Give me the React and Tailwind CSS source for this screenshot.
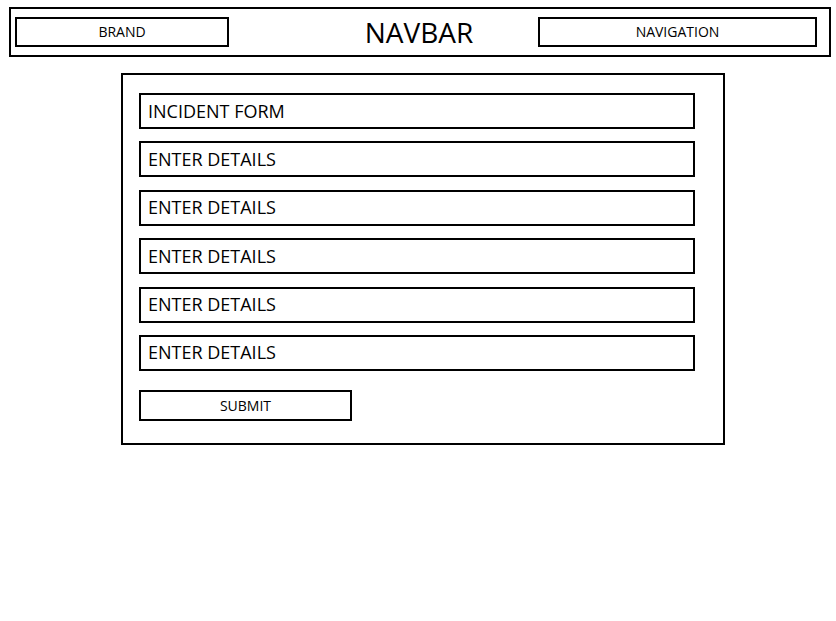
const font = { fontFamily: '"Open Sans", "Liberation Sans", sans-serif' }

const Field = ({ label }) => (
    <div className="h-[36px] border-2 border-black flex items-center pl-[7px] text-[18px] text-black">
        {label}
    </div>
)

export default function App() {
    const fields = ['ENTER DETAILS', 'ENTER DETAILS', 'ENTER DETAILS', 'ENTER DETAILS', 'ENTER DETAILS']

    return (
        <div className="min-h-[621px] bg-white pt-[7px] pl-[9px]" style={font}>
            {/* Navbar */}
            <div className="w-[822px] h-[50px] border-2 border-black grid grid-cols-[1fr_auto_1fr] items-center pl-[4px] pr-[12px]">
                <div className="justify-self-start w-[214px] h-[30px] border-2 border-black flex items-center justify-center pb-[2px] text-[14px] text-black">
                    BRAND
                </div>
                <div className="text-[28px] text-black leading-none ml-[6px] -mt-[1px]">NAVBAR</div>
                <div className="justify-self-end w-[279px] h-[30px] border-2 border-black flex items-center justify-center pb-[2px] text-[14px] text-black">
                    NAVIGATION
                </div>
            </div>

            {/* Form */}
            <div className="ml-[112px] mt-[16px] w-[604px] h-[372px] border-2 border-black pt-[18px] pl-[16px]">
                <div className="w-[556px] flex flex-col gap-[12.4px]">
                    <Field label="INCIDENT FORM" />
                    {fields.map((f, i) => (
                        <Field key={i} label={f} />
                    ))}
                </div>
                <button className="mt-[19px] w-[213px] h-[31px] border-2 border-black flex items-center justify-center text-[14px] text-black bg-white">
                    SUBMIT
                </button>
            </div>
        </div>
    )
}
